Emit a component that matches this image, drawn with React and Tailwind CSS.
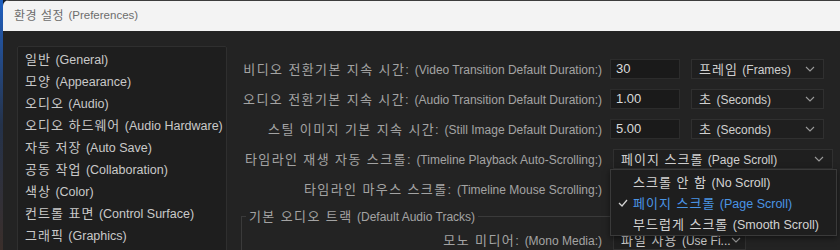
const FONT = { fontFamily: '"Liberation Sans", "Noto Sans CJK KR", sans-serif' };

function Chevron() {
  return (
    <svg width="10" height="6" viewBox="0 0 10 6" className="shrink-0">
      <polyline points="1,1 5,5 9,1" fill="none" stroke="#9a9a9a" strokeWidth="1.1" />
    </svg>
  );
}

function Label({ ko, en, className = "" }) {
  return (
    <div className={`text-right whitespace-nowrap ${className}`}>
      <span className="text-[13px] tracking-[1.4px] text-[#a3a3a3]">{ko}</span>{" "}
      <span className="text-[12px] text-[#a3a3a3]">{en}</span>
    </div>
  );
}

function Select({ ko, en, className = "" }) {
  return (
    <div
      className={`flex h-[20px] items-center justify-between border border-[#303030] bg-[#1f1f1f] pl-[7px] pr-[8px] ${className}`}
    >
      <span className="whitespace-nowrap text-[#cfcfcf]">
        <span className="text-[13px] tracking-[1px]">{ko}</span>{" "}
        <span className="text-[12px]">{en}</span>
      </span>
      <Chevron />
    </div>
  );
}

function Input({ value }) {
  return (
    <div className="flex h-[20px] w-[70px] items-center border border-[#2c2c2c] bg-[#1a1a1a] pl-[5px] text-[13px] text-[#dadada]">
      {value}
    </div>
  );
}

const categories = [
  ["일반", "(General)"],
  ["모양", "(Appearance)"],
  ["오디오", "(Audio)"],
  ["오디오 하드웨어", "(Audio Hardware)"],
  ["자동 저장", "(Auto Save)"],
  ["공동 작업", "(Collaboration)"],
  ["색상", "(Color)"],
  ["컨트롤 표면", "(Control Surface)"],
  ["그래픽", "(Graphics)"],
];

const rows = [
  ["비디오 전환기본 지속 시간:", "(Video Transition Default Duration:)", "30", "프레임", "(Frames)"],
  ["오디오 전환기본 지속 시간:", "(Audio Transition Default Duration:)", "1.00", "초", "(Seconds)"],
  ["스틸 이미지 기본 지속 시간:", "(Still Image Default Duration:)", "5.00", "초", "(Seconds)"],
];

const scrollOptions = [
  ["스크롤 안 함", "(No Scroll)", false],
  ["페이지 스크롤", "(Page Scroll)", true],
  ["부드럽게 스크롤", "(Smooth Scroll)", false],
];

export default function App() {
  return (
    <div className="flex h-[250px] w-[840px] overflow-hidden bg-[#0f1a2c]" style={FONT}>
      <div className="w-[3px] shrink-0 bg-gradient-to-b from-[#1d5fc0] via-[#24324a] to-[#3a2e2a]" />
      <div className="flex flex-1 flex-col overflow-hidden rounded-tl-[6px] bg-[#232323]">
        <div className="flex h-[31px] shrink-0 items-center border-t border-[#3c3c3c] bg-[#f3f3f3] pl-[11px] text-[#6d6d6d]">
          <span className="text-[12px] tracking-[0.5px]">환경 설정</span>&nbsp;
          <span className="text-[11.5px]">(Preferences)</span>
        </div>
        <div className="flex flex-1">
          <div className="ml-[14px] mt-[15px] w-[210px] shrink-0 rounded-[2px] border border-[#2f2f2f] bg-[#1e1e1e] pt-[1px]">
            {categories.map(([ko, en]) => (
              <div key={en} className="h-[22px] whitespace-nowrap pl-[7px] leading-[22px] text-[#c9c9c9]">
                <span className="text-[13px] tracking-[1px]">{ko}</span>{" "}
                <span className="text-[12.5px]">{en}</span>
              </div>
            ))}
          </div>

          <div className="flex flex-1 flex-col pt-[23px]">
            {rows.map(([ko, en, val, uko, uen]) => (
              <div key={en} className="flex h-[30px] items-center">
                <Label ko={ko} en={en} className="w-[375px]" />
                <div className="ml-[8px]">
                  <Input value={val} />
                </div>
                <Select ko={uko} en={uen} className="ml-[11px] w-[133px]" />
              </div>
            ))}

            <div className="flex h-[30px] items-center">
              <Label ko="타임라인 재생 자동 스크롤:" en="(Timeline Playback Auto-Scrolling:)" className="w-[375px]" />
              <div className="relative ml-[11px] w-[220px]">
                <Select ko="페이지 스크롤" en="(Page Scroll)" className="w-full" />
                <div className="absolute left-[-3px] top-full z-10 w-[227px] border border-[#3a3a3a] bg-[#1e1e1e] py-[1px] shadow-[0_2px_6px_rgba(0,0,0,0.5)]">
                  {scrollOptions.map(([ko, en, sel]) => (
                    <div
                      key={en}
                      className={`relative h-[21px] whitespace-nowrap pl-[22px] leading-[21px] ${
                        sel ? "text-[#4a94e4]" : "text-[#d2d2d2]"
                      }`}
                    >
                      {sel && (
                        <svg width="10" height="8" viewBox="0 0 10 8" className="absolute left-[7px] top-[7px]">
                          <polyline points="1,4 4,7 9,1" fill="none" stroke="#d2d2d2" strokeWidth="1.3" />
                        </svg>
                      )}
                      <span className="text-[13px] tracking-[1px]">{ko}</span>{" "}
                      <span className="text-[12.5px]">{en}</span>
                    </div>
                  ))}
                </div>
              </div>
            </div>

            <div className="flex h-[30px] items-center">
              <Label ko="타임라인 마우스 스크롤:" en="(Timeline Mouse Scrolling:)" className="w-[375px]" />
            </div>

            <fieldset className="ml-[14px] mr-[4px] border-l border-t border-[#3a3a3a]">
              <legend className="ml-[4px] h-[24px] px-[3px] leading-[24px] whitespace-nowrap text-[#a3a3a3]">
                <span className="text-[13px] tracking-[1.4px]">기본 오디오 트랙</span>{" "}
                <span className="text-[12px]">(Default Audio Tracks)</span>
              </legend>
              <div className="flex h-[24px] items-center">
                <Label ko="모노 미디어:" en="(Mono Media:)" className="w-[360px]" />
                <Select ko="파일 사용" en="(Use Fi..." className="ml-[11px] w-[133px]" />
              </div>
            </fieldset>
          </div>
        </div>
      </div>
    </div>
  );
}
